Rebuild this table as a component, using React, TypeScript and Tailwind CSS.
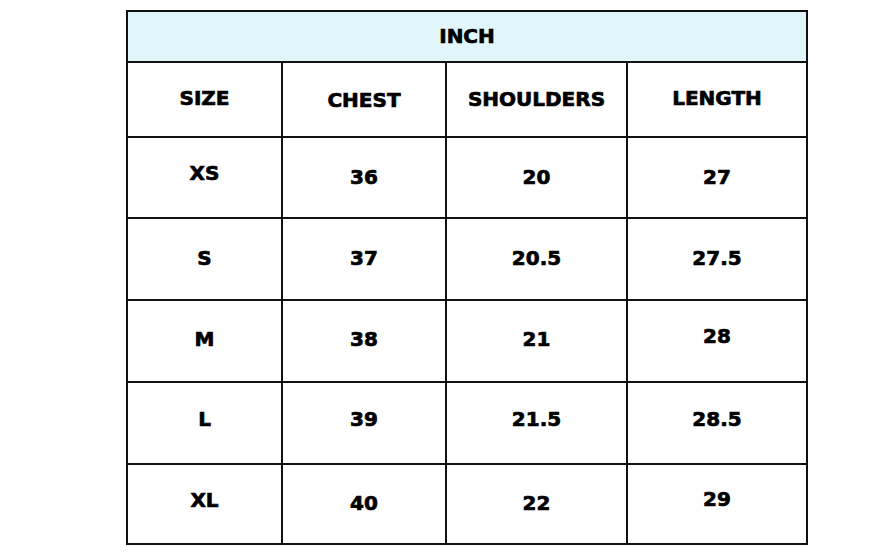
import React from "react";

type Cell = [string, string];

const header: Cell[] = [
  ["SIZE", "-translate-y-[2px]"],
  ["CHEST", "translate-y-0"],
  ["SHOULDERS", "-translate-y-[1.5px]"],
  ["LENGTH", "-translate-y-[2.5px]"],
];

const rows: { h: string; cells: Cell[] }[] = [
  {
    h: "h-[81px]",
    cells: [
      ["XS", "-translate-y-[5.5px]"],
      ["36", "-translate-y-[1px]"],
      ["20", "-translate-y-[1.5px]"],
      ["27", "-translate-y-[1.5px]"],
    ],
  },
  {
    h: "h-[82px]",
    cells: [
      ["S", "-translate-y-[1px]"],
      ["37", "-translate-y-[1px]"],
      ["20.5", "-translate-y-[1px]"],
      ["27.5", "-translate-y-[1px]"],
    ],
  },
  {
    h: "h-[82px]",
    cells: [
      ["M", "-translate-y-[2px]"],
      ["38", "-translate-y-[2px]"],
      ["21", "-translate-y-[2px]"],
      ["28", "-translate-y-[5.5px]"],
    ],
  },
  {
    h: "h-[82px]",
    cells: [
      ["L", "-translate-y-[4.5px]"],
      ["39", "-translate-y-[4.5px]"],
      ["21.5", "-translate-y-[4.5px]"],
      ["28.5", "-translate-y-[4.5px]"],
    ],
  },
  {
    h: "h-[78px]",
    cells: [
      ["XL", "-translate-y-[4px]"],
      ["40", "-translate-y-[1.5px]"],
      ["22", "-translate-y-[1.5px]"],
      ["29", "-translate-y-[5px]"],
    ],
  },
];

function Row({ cells, h, last }: { cells: Cell[]; h: string; last?: boolean }) {
  return (
    <div className={`grid grid-cols-[155px_164px_181px_178px] ${h} ${last ? "" : "border-b-2 border-[#111]"}`}>
      {cells.map(([c, off], i) => (
        <div
          key={i}
          className={`flex items-center justify-center ${i < 3 ? "border-r-2 border-[#111]" : ""}`}
        >
          <span className={off}>{c}</span>
        </div>
      ))}
    </div>
  );
}

export default function App() {
  return (
    <div className="w-[890px] h-[558px] bg-white pt-[10px] pl-[126px]" style={{ fontFamily: '"DejaVu Sans", sans-serif' }}>
      <div className="w-[682px] border-2 border-[#111] text-[20px] font-bold text-black leading-none [-webkit-text-stroke:0.7px_#000]">
        <div className="h-[51px] bg-[#e1f6fa] border-b-2 border-[#111] flex items-center justify-center">
          <span className="-translate-y-[1px]">INCH</span>
        </div>
        <Row cells={header} h="h-[75px]" />
        {rows.map((r, i) => (
          <Row key={i} cells={r.cells} h={r.h} last={i === rows.length - 1} />
        ))}
      </div>
    </div>
  );
}
